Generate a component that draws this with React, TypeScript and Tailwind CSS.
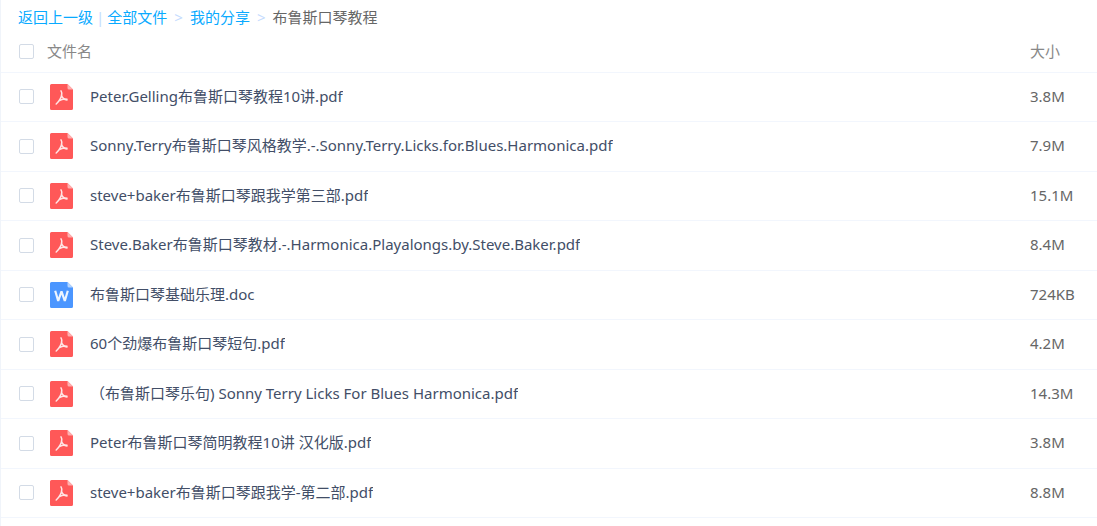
import { useState } from "react";

type FileKind = "pdf" | "doc";

const FILES: { name: string; size: string; kind: FileKind }[] = [
  { name: "Peter.Gelling布鲁斯口琴教程10讲.pdf", size: "3.8M", kind: "pdf" },
  { name: "Sonny.Terry布鲁斯口琴风格教学.-.Sonny.Terry.Licks.for.Blues.Harmonica.pdf", size: "7.9M", kind: "pdf" },
  { name: "steve+baker布鲁斯口琴跟我学第三部.pdf", size: "15.1M", kind: "pdf" },
  { name: "Steve.Baker布鲁斯口琴教材.-.Harmonica.Playalongs.by.Steve.Baker.pdf", size: "8.4M", kind: "pdf" },
  { name: "布鲁斯口琴基础乐理.doc", size: "724KB", kind: "doc" },
  { name: "60个劲爆布鲁斯口琴短句.pdf", size: "4.2M", kind: "pdf" },
  { name: "（布鲁斯口琴乐句) Sonny Terry Licks For Blues Harmonica.pdf", size: "14.3M", kind: "pdf" },
  { name: "Peter布鲁斯口琴简明教程10讲 汉化版.pdf", size: "3.8M", kind: "pdf" },
  { name: "steve+baker布鲁斯口琴跟我学-第二部.pdf", size: "8.8M", kind: "pdf" },
];

function FileIcon({ kind }: { kind: FileKind }) {
  const pdf = kind === "pdf";
  return (
    <svg viewBox="0 0 23 26" className="h-[26px] w-[23px] shrink-0" aria-hidden="true">
      <path
        d="M1.5 0H17.5L23 5.5V24.5A1.5 1.5 0 0 1 21.5 26H1.5A1.5 1.5 0 0 1 0 24.5V1.5A1.5 1.5 0 0 1 1.5 0Z"
        fill={pdf ? "#ff5858" : "#4b96ff"}
      />
      <path d="M17.5 0L23 5.5H19A1.5 1.5 0 0 1 17.5 4Z" fill={pdf ? "#ffb0b0" : "#b4d4ff"} />
      {pdf ? (
        <path
          d="M11 6.8C12.4 9 11.6 12.4 10.2 14.8C9 17 7.6 18.8 6.2 20M11.4 11C12 13.2 14 15.6 17 16M8.8 16.8C11 15.6 14 14.8 17 15.2"
          fill="none"
          stroke="#fff"
          strokeOpacity="0.85"
          strokeWidth="1.5"
          strokeLinecap="round"
          strokeLinejoin="round"
        />
      ) : (
        <path
          d="M5.2 8.8L8.2 19L11.5 9.4L14.8 19L17.8 8.8"
          fill="none"
          stroke="#fff"
          strokeOpacity="0.9"
          strokeWidth="2.2"
          strokeLinejoin="bevel"
        />
      )}
    </svg>
  );
}

function Checkbox({ label, checked, onChange }: { label: string; checked: boolean; onChange: () => void }) {
  return (
    <input
      type="checkbox"
      aria-label={label}
      checked={checked}
      onChange={onChange}
      className="block size-[15px] shrink-0 appearance-none rounded-xs border border-[#d3dbe6] bg-white checked:border-[#09aaff] checked:bg-[#09aaff]"
    />
  );
}

export default function App() {
  const [selected, setSelected] = useState<string[]>([]);
  const allSelected = selected.length === FILES.length;

  const toggle = (name: string) =>
    setSelected((prev) => (prev.includes(name) ? prev.filter((n) => n !== name) : [...prev, name]));

  return (
    <main className="min-h-screen border-l border-[#f0f4fa] bg-white font-['Noto_Sans','Noto_Sans_CJK_SC',sans-serif] text-[15px] leading-5">
      <nav aria-label="路径" className="flex h-8 items-center pt-0.5 pl-[17px] text-[#666]">
        <a href="#back" className="text-[#09aaff]">返回上一级</a>
        <span className="mx-[3px] text-[#c4dbfe]">|</span>
        <a href="#all" className="text-[#09aaff]">全部文件</a>
        <span className="mx-[7px] text-[#c4dbfe]">&gt;</span>
        <a href="#share" className="text-[#09aaff]">我的分享</a>
        <span className="mx-[7px] text-[#c4dbfe]">&gt;</span>
        <span>布鲁斯口琴教程</span>
      </nav>
      <table className="w-full table-fixed border-collapse text-left">
        <thead>
          <tr className="h-10 border-b border-[#f2f6fd] text-[#888]">
            <th className="p-0 pl-[18px] font-normal">
              <div className="flex items-center gap-[13px]">
                <Checkbox
                  label="全选"
                  checked={allSelected}
                  onChange={() => setSelected(allSelected ? [] : FILES.map((f) => f.name))}
                />
                <span className="pb-0.5">文件名</span>
              </div>
            </th>
            <th className="w-[67px] p-0 pb-0.5 font-normal">大小</th>
          </tr>
        </thead>
        <tbody>
          {FILES.map((file) => (
            <tr key={file.name} className="border-b border-[#f2f6fd] odd:h-[49px] even:h-[50px]">
              <td className="p-0 pl-[18px]">
                <div className="flex items-center">
                  <Checkbox
                    label={file.name}
                    checked={selected.includes(file.name)}
                    onChange={() => toggle(file.name)}
                  />
                  <span className="mr-[17px] ml-4">
                    <FileIcon kind={file.kind} />
                  </span>
                  <a href="#file" className="truncate pb-0.5 text-[#424e67]">{file.name}</a>
                </div>
              </td>
              <td className="p-0 pb-0.5 text-[#666]">{file.size}</td>
            </tr>
          ))}
        </tbody>
      </table>
    </main>
  );
}
